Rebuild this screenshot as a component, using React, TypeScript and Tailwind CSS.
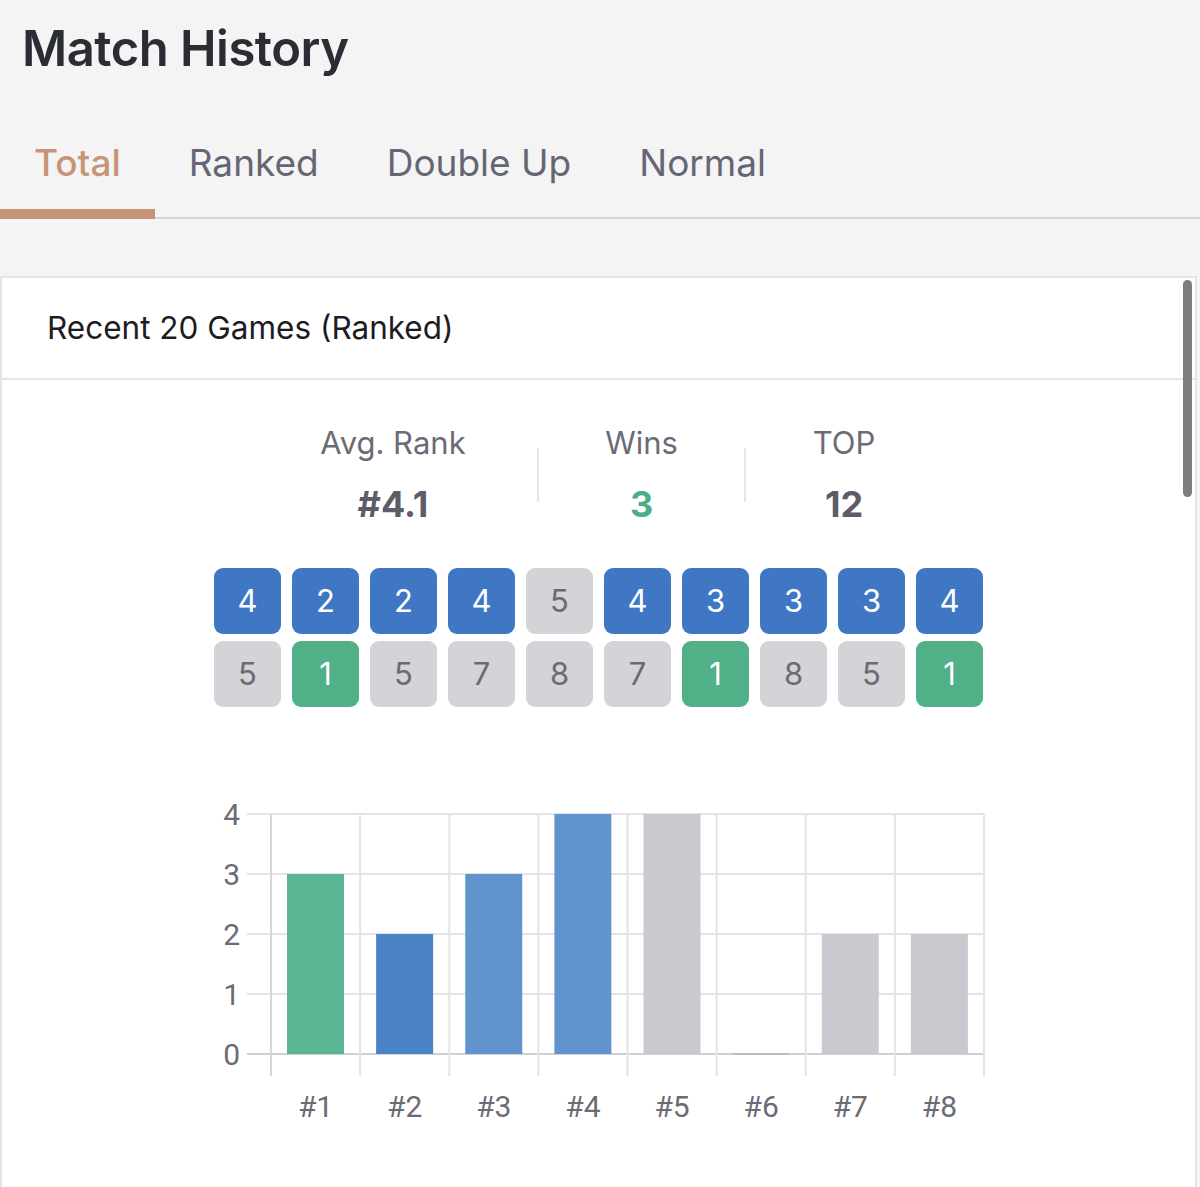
const topRow = [
  { n: 4, c: 'blue' },
  { n: 2, c: 'blue' },
  { n: 2, c: 'blue' },
  { n: 4, c: 'blue' },
  { n: 5, c: 'gray' },
  { n: 4, c: 'blue' },
  { n: 3, c: 'blue' },
  { n: 3, c: 'blue' },
  { n: 3, c: 'blue' },
  { n: 4, c: 'blue' },
]

const bottomRow = [
  { n: 5, c: 'gray' },
  { n: 1, c: 'green' },
  { n: 5, c: 'gray' },
  { n: 7, c: 'gray' },
  { n: 8, c: 'gray' },
  { n: 7, c: 'gray' },
  { n: 1, c: 'green' },
  { n: 8, c: 'gray' },
  { n: 5, c: 'gray' },
  { n: 1, c: 'green' },
]

const boxStyle: Record<string, string> = {
  blue: 'bg-[#3f77c5] text-white',
  green: 'bg-[#52b088] text-white',
  gray: 'bg-[#d3d3d8] text-[#6b6b75]',
}

const bars = [
  { v: 3, fill: '#5bb593' },
  { v: 2, fill: '#4a84c6' },
  { v: 3, fill: '#6194cd' },
  { v: 4, fill: '#6194cd' },
  { v: 4, fill: '#c9c9cf' },
  { v: 0, fill: '#c9c9cf' },
  { v: 2, fill: '#c9c9cf' },
  { v: 2, fill: '#c9c9cf' },
]

const tabs = ['Total', 'Ranked', 'Double Up', 'Normal']

function RankChart() {
  const left = 72
  const right = 785
  const step = (right - left) / 8
  const base = 265
  const unit = 60
  return (
    <svg width="800" height="350" viewBox="0 0 800 350" className="block mx-auto">
      {/* horizontal grid */}
      {[0, 1, 2, 3, 4].map((v) => (
        <line
          key={`h${v}`}
          x1={48}
          x2={right}
          y1={base - v * unit}
          y2={base - v * unit}
          stroke={v === 0 ? '#cfcfd4' : '#e4e4e8'}
          strokeWidth={2}
        />
      ))}
      {/* vertical grid */}
      {Array.from({ length: 9 }).map((_, i) => (
        <line
          key={`v${i}`}
          x1={left + i * step}
          x2={left + i * step}
          y1={25}
          y2={287}
          stroke={i === 0 ? '#d6d6db' : '#e4e4e8'}
          strokeWidth={2}
        />
      ))}
      {bars.map((b, i) => {
        const x = left + i * step + 16
        const h = b.v * unit
        return b.v > 0 ? (
          <rect key={`b${i}`} x={x} y={base - h} width={57} height={h} fill={b.fill} />
        ) : (
          <rect key={`b${i}`} x={x} y={base - 1} width={57} height={2} fill="#bdbdc3" />
        )
      })}
      {[0, 1, 2, 3, 4].map((v) => (
        <text
          key={`y${v}`}
          x={41}
          y={base - v * unit + 11}
          textAnchor="end"
          fontSize={30}
          fill="#6b6b75"
          fontFamily="Roboto, sans-serif"
        >
          {v}
        </text>
      ))}
      {bars.map((_, i) => (
        <text
          key={`x${i}`}
          x={left + i * step + step / 2}
          y={328}
          textAnchor="middle"
          fontSize={30}
          fill="#6b6b75"
          fontFamily="Roboto, sans-serif"
        >
          #{i + 1}
        </text>
      ))}
    </svg>
  )
}

export default function App() {
  return (
    <div className="relative h-[1187px] w-[1200px] overflow-hidden bg-[#f4f4f4] font-['Inter',sans-serif]">
      <h1 className="pl-[22px] pt-[21px] text-[49px] leading-[56px] font-semibold tracking-[-0.5px] text-[#2b2d35]">
        Match History
      </h1>

      <div className="mt-[63px] flex border-b-2 border-[#d3d3da]">
        {tabs.map((t, i) => (
          <div
            key={t}
            className={`px-[34px] pb-[23px] text-[37px] leading-[46px] border-b-[10px] -mb-[2px] ${
              i === 0 ? 'border-[#c79478] text-[#c79478] font-medium' : 'border-transparent text-[#656674]'
            }`}
          >
            {t}
          </div>
        ))}
      </div>

      <div className="mt-[57px] h-[1000px] w-[1197px] border-t-2 border-l-2 border-r-2 border-[#e4e4e8] bg-white">
        <div className="flex h-[102px] items-center border-b-2 border-[#e6e6ea] pl-[45px] text-[31.5px] text-[#1c1c22]">
          Recent 20 Games (Ranked)
        </div>

        <div className="mt-[44px] flex items-center pl-[247px]">
          <div className="flex w-[288px] flex-col items-center">
            <div className="text-[31px] leading-[38px] text-[#6b6b75]">Avg. Rank</div>
            <div className="mt-[20px] text-[36px] leading-[44px] font-bold text-[#5c5d68]">#4.1</div>
          </div>
          <div className="h-[54px] w-[2px] bg-[#e6e6ea]" />
          <div className="flex w-[205px] flex-col items-center">
            <div className="text-[31px] leading-[38px] text-[#6b6b75]">Wins</div>
            <div className="mt-[20px] text-[36px] leading-[44px] font-bold text-[#4bae85]">3</div>
          </div>
          <div className="h-[54px] w-[2px] bg-[#e6e6ea]" />
          <div className="flex w-[196px] flex-col items-center">
            <div className="text-[31px] leading-[38px] text-[#6b6b75]">TOP</div>
            <div className="mt-[20px] text-[36px] leading-[44px] font-bold text-[#5c5d68]">12</div>
          </div>
        </div>

        <div className="mx-auto mt-[42px] flex w-fit flex-col gap-[7px]">
          {[topRow, bottomRow].map((row, r) => (
            <div key={r} className="flex gap-[11px]">
              {row.map((b, i) => (
                <div
                  key={i}
                  className={`flex h-[66px] w-[67px] items-center justify-center rounded-[9px] text-[31px] ${boxStyle[b.c]}`}
                >
                  {b.n}
                </div>
              ))}
            </div>
          ))}
        </div>

        <div className="mt-[82px]">
          <RankChart />
        </div>
      </div>

      {/* scrollbar */}
      <div className="absolute left-[1183px] top-[280px] h-[217px] w-[9px] rounded-full bg-[#7d7d7d]" />
    </div>
  )
}
